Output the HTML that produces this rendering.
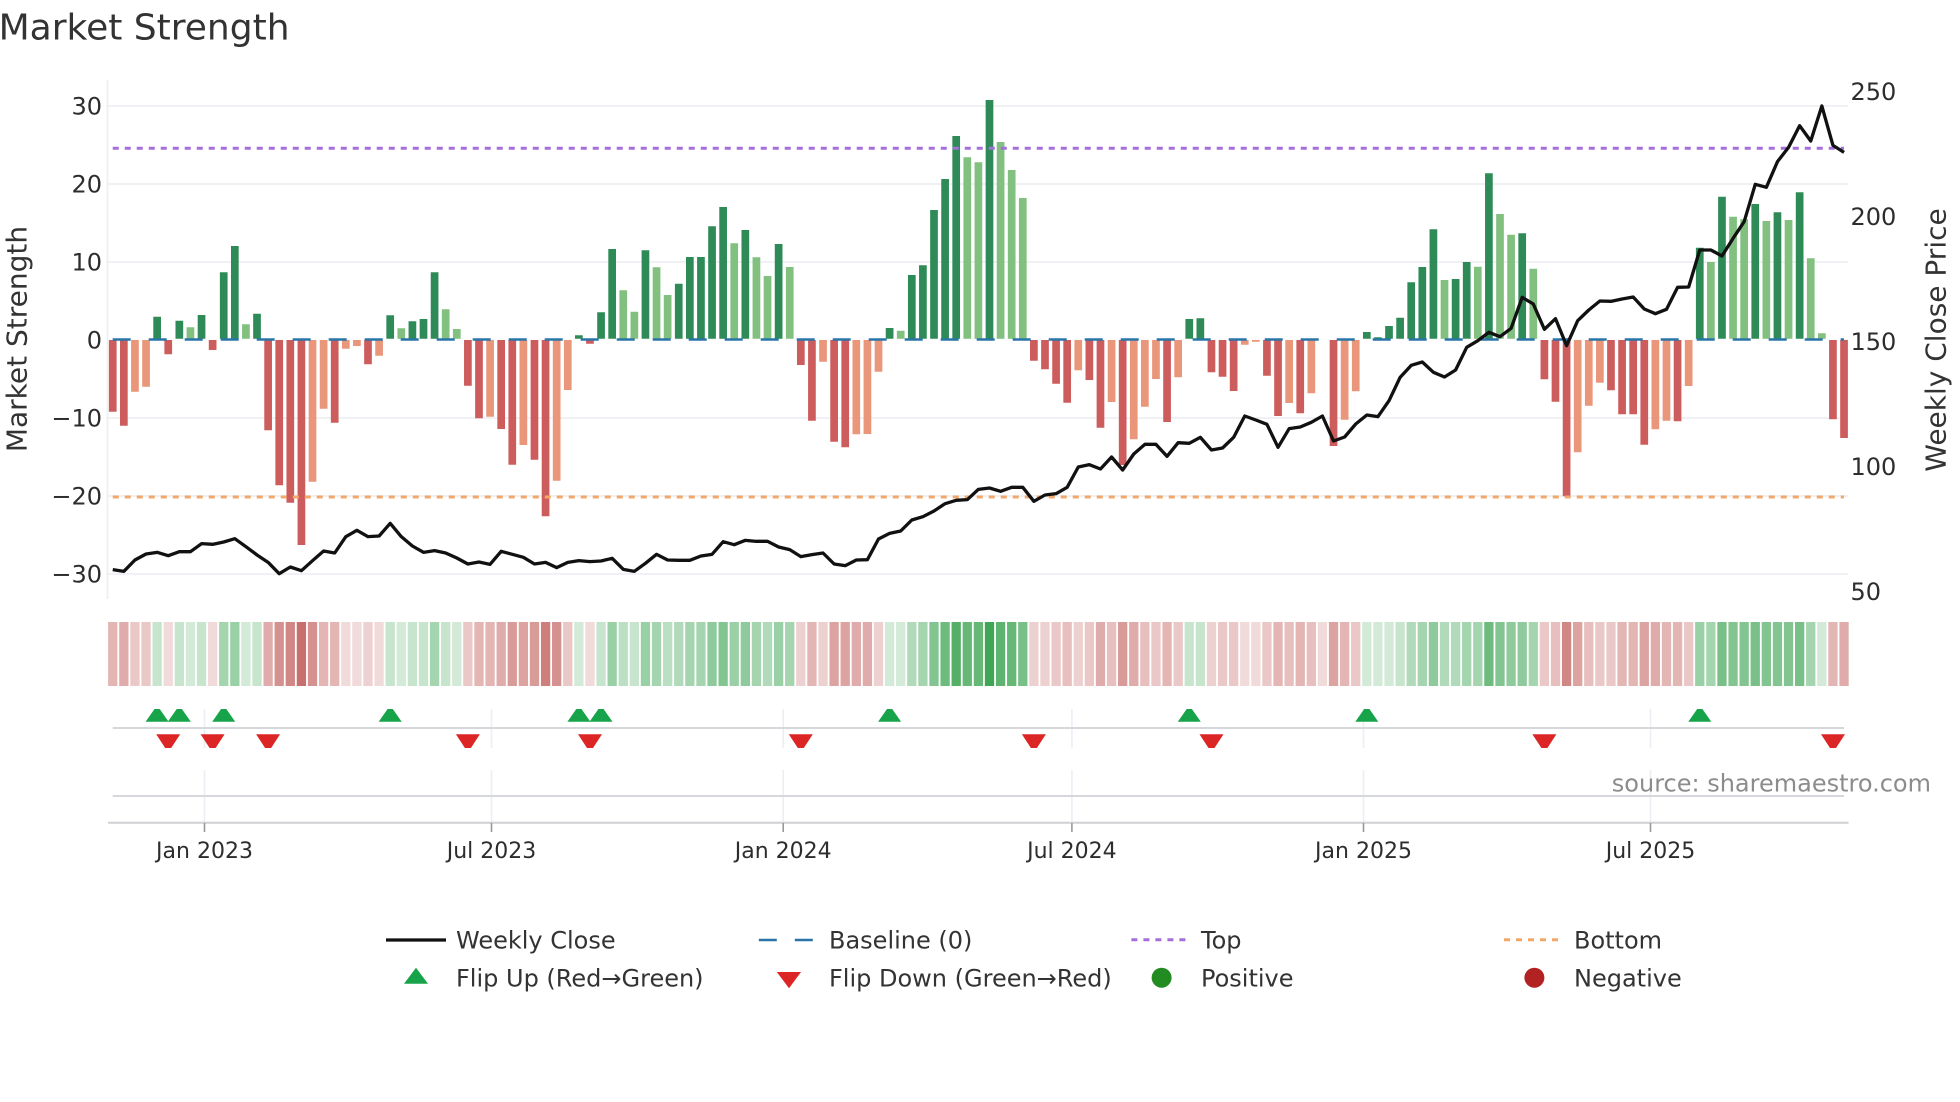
<!DOCTYPE html>
<html><head><meta charset="utf-8"><title>Market Strength</title>
<style>
html,body{margin:0;padding:0;background:#fff;width:1960px;height:1102px;overflow:hidden}
svg{display:block}
text{font-family:"DejaVu Sans","Liberation Sans",sans-serif;fill:#333}
.t{font-size:24px;fill:#2d2d2d}
.x{font-size:22px;text-anchor:middle;fill:#2d2d2d}
.l{font-size:24px;fill:#333}
.a{font-size:28px;text-anchor:middle;fill:#333}
</style></head><body>
<svg width="1960" height="1102" viewBox="0 0 1960 1102" xmlns="http://www.w3.org/2000/svg">
<text x="-1.4" y="39.3" style="font-size:36px;fill:#333">Market Strength</text>

<!-- grid -->
<path d="M108 106H1848M108 184H1848M108 262H1848M108 418H1848M108 496H1848M108 574H1848" stroke="#f0f1f5" stroke-width="2" fill="none"/>
<path d="M107.5 80V599" stroke="#eef0f6" stroke-width="2" fill="none"/>

<!-- bars -->
<g transform="translate(112.75 0) scale(11.098 1)" fill="none" stroke-width=".694">
<path stroke="#2e8b57" d="M4 340V316.7M6 340V320.7M8 340V315M10 340V272.3M11 340V246M13 340V313.7M25 340V315.3M27 340V321.3M28 340V319M29 340V272.3M42 340V335.3M44 340V312.3M45 340V249M48 340V250.3M51 340V283.7M52 340V257M53 340V257M54 340V226.3M55 340V207M57 340V230M60 340V244M70 340V328M72 340V275M73 340V265.3M74 340V210M75 340V179M76 340V136M79 340V100M97 340V319M98 340V318.3M113 340V332M114 340V337.3M115 340V326M116 340V317.7M117 340V282.3M118 340V267M119 340V229.3M121 340V279M122 340V262M124 340V173.3M127 340V233.3M143 340V247.7M145 340V196.7M148 340V204M150 340V212.3M152 340V192.3"/>
<path stroke="#81c07f" d="M7 340V327.3M12 340V324.3M26 340V328.3M30 340V309.3M31 340V329M46 340V290.3M47 340V311.7M49 340V267.3M50 340V295M56 340V243.3M58 340V257.3M59 340V276M61 340V267M71 340V330.7M77 340V157.3M78 340V162.3M80 340V142M81 340V170M82 340V198M120 340V280M123 340V266.7M125 340V214M126 340V234.7M128 340V268.7M144 340V262M146 340V216.7M147 340V219.3M149 340V221M151 340V220M153 340V258.3M154 340V333.3"/>
<path stroke="#cd5c5c" d="M0 340V411.7M1 340V425.7M5 340V354.3M9 340V350M14 340V430.3M15 340V485.3M16 340V502.7M17 340V545M20 340V422.7M23 340V364.3M32 340V385.7M33 340V418.3M35 340V429M36 340V464.7M38 340V459.7M39 340V516.3M43 340V343.7M62 340V365M63 340V420.7M65 340V441.7M66 340V447.3M83 340V360.7M84 340V369.3M85 340V383.7M86 340V402.7M88 340V380M89 340V427.7M91 340V465M95 340V422M99 340V372.3M100 340V376.7M101 340V391M104 340V375.7M105 340V416M107 340V413.3M110 340V446M129 340V379.3M130 340V401.7M131 340V496.3M135 340V390.3M136 340V414.3M137 340V414.3M138 340V444.7M141 340V421.3M155 340V419.3M156 340V438"/>
<path stroke="#e9967a" d="M2 340V391.7M3 340V386.7M18 340V481.7M19 340V408.7M21 340V348.7M22 340V346M24 340V355.7M34 340V416.7M37 340V445M40 340V480.7M41 340V390M64 340V361.7M67 340V434.3M68 340V434M69 340V371.7M87 340V370.3M90 340V402M92 340V439.3M93 340V406.7M94 340V379M96 340V377.3M102 340V344.7M103 340V341.7M106 340V403M108 340V393.3M111 340V419.7M112 340V391.3M132 340V452.3M133 340V405.7M134 340V382.7M139 340V429.3M140 340V420.7M142 340V386"/>
</g>

<!-- zero line + baseline -->
<path d="M108 339.35H1848" stroke="#fbfbfd" stroke-width="1.3" fill="none"/>
<path d="M112.7 339.5H1844" stroke="#2a75a8" stroke-width="2.6" stroke-dasharray="18 18" fill="none"/>
<!-- top/bottom -->
<path d="M112.75 148.3H1844" stroke="#a46fdc" stroke-width="3" stroke-dasharray="6 6" fill="none"/>
<path d="M112.75 497H1844" stroke="#f4a868" stroke-width="3" stroke-dasharray="6 6" fill="none"/>

<!-- price -->
<g transform="translate(112.75 330) scale(11.098 .33333)">
<polyline fill="none" stroke="#111" stroke-width="3.3" stroke-linejoin="round" vector-effect="non-scaling-stroke" points="0,719 1,724 2,690 3,672 4,667 5,677 6,665 7,665 8,641 9,643 10,636 11,626 12,650 13,675 14,697 15,731 16,711 17,722 18,692 19,663 20,669 21,620 22,601 23,620 24,618 25,580 26,620 27,648 28,667 29,662 30,669 31,684 32,702 33,696 34,703 35,664 36,673 37,682 38,702 39,697 40,713 41,697 42,692 43,695 44,693 45,685 46,718 47,724 48,700 49,673 50,690 51,691 52,691 53,678 54,673 55,635 56,644 57,631 58,634 59,634 60,651 61,659 62,680 63,674 64,669 65,702 66,707 67,690 68,689 69,627 70,610 71,603 72,570 73,560 74,543 75,521 76,511 77,509 78,478 79,474 80,484 81,472 82,472 83,514 84,495 85,491 86,472 87,411 88,404 89,417 90,381 91,420 92,372 93,343 94,343 95,379 96,338 97,340 98,322 99,360 100,354 101,322 102,258 103,270 104,283 105,352 106,296 107,291 108,277 109,258 110,333 111,321 112,282 113,255 114,260 115,212 116,142 117,106 118,96 119,127 120,141 121,120 122,52 123,32 124,7 125,20 126,-5 127,-98 128,-78 129,-2 130,-34 131,47 132,-28 133,-60 134,-87 135,-86 136,-93 137,-99 138,-63 139,-49 140,-62 141,-128 142,-129 143,-240 144,-240 145,-222 146,-275 147,-325 148,-437 149,-428 150,-505 151,-548 152,-613 153,-567 154,-672 155,-554 156,-533"/>
</g>

<!-- strip -->
<g transform="translate(112.75 622) scale(11.098 1)" fill="none" stroke-width=".838">
<g stroke="#1e9637">
<path stroke-opacity=".2" d="M7 0V64M12 0V64M26 0V64M31 0V64M42 0V64M70 0V64M71 0V64M113 0V64M114 0V64M115 0V64M154 0V64"/>
<path stroke-opacity=".25" d="M4 0V64M6 0V64M8 0V64M13 0V64M25 0V64M27 0V64M28 0V64M30 0V64M44 0V64M47 0V64M97 0V64M98 0V64M116 0V64"/>
<path stroke-opacity=".3" d="M46 0V64M50 0V64"/>
<path stroke-opacity=".35" d="M51 0V64M59 0V64M72 0V64M117 0V64M120 0V64M121 0V64"/>
<path stroke-opacity=".4" d="M10 0V64M29 0V64M49 0V64M52 0V64M53 0V64M58 0V64M61 0V64M73 0V64M118 0V64M122 0V64M123 0V64M128 0V64M144 0V64M153 0V64"/>
<path stroke-opacity=".45" d="M11 0V64M45 0V64M48 0V64M56 0V64M60 0V64M143 0V64"/>
<path stroke-opacity=".5" d="M54 0V64M57 0V64M119 0V64M126 0V64M127 0V64"/>
<path stroke-opacity=".55" d="M55 0V64M74 0V64M125 0V64M146 0V64M147 0V64M149 0V64M150 0V64M151 0V64"/>
<path stroke-opacity=".6" d="M82 0V64M145 0V64M148 0V64M152 0V64"/>
<path stroke-opacity=".65" d="M75 0V64M124 0V64"/>
<path stroke-opacity=".68" d="M77 0V64M78 0V64M81 0V64"/>
<path stroke-opacity=".72" d="M80 0V64"/>
<path stroke-opacity=".76" d="M76 0V64"/>
<path stroke-opacity=".85" d="M79 0V64"/>
</g>
<g stroke="#b94844">
<path stroke-opacity=".2" d="M5 0V64M9 0V64M21 0V64M22 0V64M24 0V64M43 0V64M102 0V64M103 0V64M109 0V64"/>
<path stroke-opacity=".25" d="M23 0V64M62 0V64M64 0V64M69 0V64M83 0V64M84 0V64M87 0V64M99 0V64"/>
<path stroke-opacity=".3" d="M2 0V64M3 0V64M32 0V64M41 0V64M85 0V64M88 0V64M94 0V64M96 0V64M100 0V64M101 0V64M104 0V64M112 0V64M129 0V64M134 0V64M135 0V64M142 0V64"/>
<path stroke-opacity=".35" d="M86 0V64M90 0V64M93 0V64M106 0V64M108 0V64M130 0V64M133 0V64"/>
<path stroke-opacity=".4" d="M0 0V64M19 0V64M20 0V64M33 0V64M34 0V64M63 0V64M95 0V64M105 0V64M107 0V64M111 0V64M136 0V64M137 0V64M140 0V64M141 0V64M155 0V64"/>
<path stroke-opacity=".45" d="M1 0V64M14 0V64M35 0V64M67 0V64M68 0V64M89 0V64M92 0V64M139 0V64M156 0V64"/>
<path stroke-opacity=".5" d="M37 0V64M65 0V64M66 0V64M110 0V64M132 0V64M138 0V64"/>
<path stroke-opacity=".55" d="M36 0V64M38 0V64M91 0V64"/>
<path stroke-opacity=".6" d="M15 0V64M18 0V64M40 0V64"/>
<path stroke-opacity=".65" d="M16 0V64M131 0V64"/>
<path stroke-opacity=".7" d="M39 0V64"/>
<path stroke-opacity=".78" d="M17 0V64"/>
</g>
</g>

<!-- flip rows -->
<path d="M204.5 709V748M491.5 709V748M783.2 709V748M1071.9 709V748M1363.5 709V748M1650.5 709V748M204.5 770V823M491.5 770V823M783.2 770V823M1071.9 770V823M1363.5 770V823M1650.5 770V823" stroke="#eceef4" stroke-width="1.6" fill="none"/>
<path d="M112.7 728H1844M112.7 796H1844" stroke="#d6d7db" stroke-width="2" fill="none"/>
<path d="M108 822.8H1848.6" stroke="#cfd0d4" stroke-width="2" fill="none"/>
<path d="M204.5 823V832M491.5 823V832M783.2 823V832M1071.9 823V832M1363.5 823V832M1650.5 823V832" stroke="#999" stroke-width="1.6" fill="none"/>

<defs>
<path id="u" d="M-11.5 12.7L-2.6 0H2.6L11.5 12.7Z" fill="#16a34a"/>
<path id="d" d="M-12 0H12L3 13.7H-3Z" fill="#dc2626"/>
</defs>
<g transform="translate(0 709)">
<use href="#u" x="157.1"/><use href="#u" x="179.3"/><use href="#u" x="223.7"/><use href="#u" x="390.2"/><use href="#u" x="578.9"/><use href="#u" x="601"/><use href="#u" x="889.6"/><use href="#u" x="1189.3"/><use href="#u" x="1366.8"/><use href="#u" x="1699.8"/>
</g>
<g transform="translate(0 734.3)">
<use href="#d" x="168.2"/><use href="#d" x="212.6"/><use href="#d" x="268.1"/><use href="#d" x="467.9"/><use href="#d" x="590"/><use href="#d" x="800.8"/><use href="#d" x="1033.9"/><use href="#d" x="1211.5"/><use href="#d" x="1544.4"/><use href="#d" x="1833"/>
</g>

<!-- axis labels -->
<g text-anchor="end">
<text class="t" x="102" y="114.6">30</text>
<text class="t" x="102" y="192.4">20</text>
<text class="t" x="102" y="270.4">10</text>
<text class="t" x="102" y="348.3">0</text>
<text class="t" x="102" y="426.3">−10</text>
<text class="t" x="102" y="504.3">−20</text>
<text class="t" x="102" y="582.3">−30</text>
</g>
<text class="t" x="1850.5" y="100">250</text>
<text class="t" x="1850.5" y="225">200</text>
<text class="t" x="1850.5" y="350">150</text>
<text class="t" x="1850.5" y="475">100</text>
<text class="t" x="1850.5" y="600">50</text>
<text class="a" transform="translate(26.3 339) rotate(-90)">Market Strength</text>
<text class="a" transform="translate(1945.3 340) rotate(-90)">Weekly Close Price</text>

<text class="x" x="204.5" y="858">Jan 2023</text>
<text class="x" x="491.5" y="858">Jul 2023</text>
<text class="x" x="783.2" y="858">Jan 2024</text>
<text class="x" x="1071.9" y="858">Jul 2024</text>
<text class="x" x="1363.5" y="858">Jan 2025</text>
<text class="x" x="1650.5" y="858">Jul 2025</text>

<text x="1931" y="791.7" text-anchor="end" style="font-size:24px;fill:#8c8c8c">source: sharemaestro.com</text>

<!-- legend -->
<path d="M386 940H446" stroke="#111" stroke-width="3.2" fill="none"/>
<path d="M758.8 940H813" stroke="#2a75a8" stroke-width="2.6" stroke-dasharray="18 18" fill="none"/>
<path d="M1131.4 939.7H1186" stroke="#a46fdc" stroke-width="3" stroke-dasharray="6 6" fill="none"/>
<path d="M1504 939.7H1558.5" stroke="#f4a868" stroke-width="3" stroke-dasharray="6 6" fill="none"/>
<path d="M404 983.7L416 967.7L428 983.7Z" fill="#16a34a"/>
<path d="M776.8 972H801L789 988.3Z" fill="#dc2626"/>
<circle cx="1161.6" cy="977.7" r="10" fill="#228b22"/>
<circle cx="1534.4" cy="977.7" r="10" fill="#b22222"/>
<text class="l" x="456" y="948.3">Weekly Close</text>
<text class="l" x="829" y="948.3">Baseline (0)</text>
<text class="l" x="1201" y="948.3">Top</text>
<text class="l" x="1574" y="948.3">Bottom</text>
<text class="l" x="456" y="986.7">Flip Up (Red→Green)</text>
<text class="l" x="829" y="986.7">Flip Down (Green→Red)</text>
<text class="l" x="1201" y="986.7">Positive</text>
<text class="l" x="1574" y="986.7">Negative</text>
</svg>
</body></html>
